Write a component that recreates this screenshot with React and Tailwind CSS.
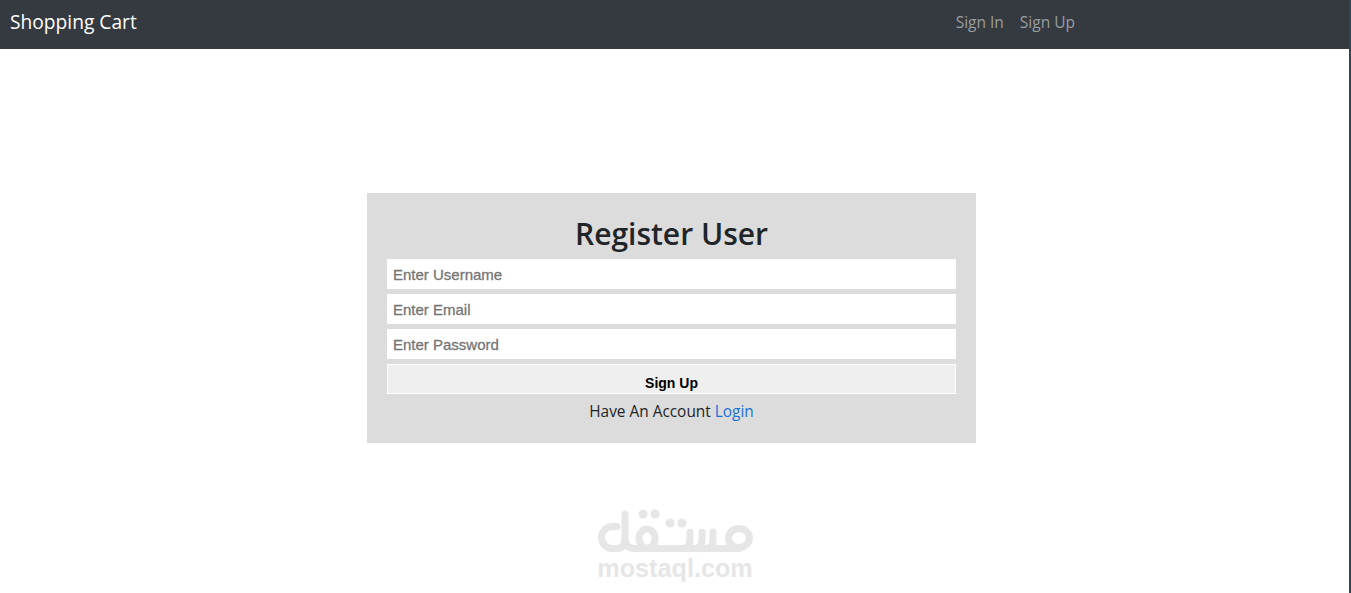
function MostaqlLogo() {
  return (
    <svg width="156" height="50" viewBox="0 0 156 50" fill="none" stroke="#e6e6e6" strokeWidth="7" strokeLinecap="round" strokeLinejoin="round">
      <path d="M20 21.500 H15.500 A11 11 0 0 0 15.500 43.500 H20 Q28 43.500 28 33 V9" />
      <path d="M28 33 Q28 43.500 38 43.500 H142" />
      <ellipse cx="50" cy="33.500" rx="8" ry="9.500" />
      <path d="M93 27 V35 Q93 43.500 85 43.500 M105 27 V35 Q105 43.500 97 43.500 M116 27 V35 Q116 43.500 108 43.500" />
      <ellipse cx="142" cy="33" rx="10.500" ry="9.500" />
      <circle cx="46" cy="9" r="4.500" fill="#e6e6e6" stroke="none" />
      <circle cx="58" cy="9" r="4.500" fill="#e6e6e6" stroke="none" />
      <circle cx="73" cy="18" r="4.500" fill="#e6e6e6" stroke="none" />
      <circle cx="85" cy="18" r="4.500" fill="#e6e6e6" stroke="none" />
    </svg>
  )
}

function Field({ placeholder, type }) {
  return (
    <input
      type={type}
      placeholder={placeholder}
      className="h-[30px] w-full bg-white px-1.5 font-['Liberation_Sans',sans-serif] text-[15px] text-black outline-none placeholder:text-[#757575] placeholder:[-webkit-text-stroke:0.3px]"
    />
  )
}

export default function App() {
  return (
    <div className="flex min-h-[593px] font-['Open_Sans','Noto_Sans',sans-serif] text-[#212529]">
      <div className="min-w-0 flex-1 bg-white">
        <nav className="flex h-[49px] items-center bg-[#343a40] pb-1 pl-2.5 pr-[274px]">
          <a href="#" className="text-[19.2px] text-white">Shopping Cart</a>
          <div className="ml-auto flex gap-4 text-[15.5px] text-[#9a9da0]">
            <a href="#">Sign In</a>
            <a href="#">Sign Up</a>
          </div>
        </nav>

        <main className="pl-[367px] pt-[144px]">
          <form className="flex h-[250px] w-[609px] flex-col gap-[5px] bg-[#dcdcdc] px-5 pt-5">
            <h1 className="h-[41px] text-center text-[30px] leading-[41px] font-semibold">Register User</h1>
            <Field type="text" placeholder="Enter Username" />
            <Field type="email" placeholder="Enter Email" />
            <Field type="password" placeholder="Enter Password" />
            <button type="button" className="h-[30px] border border-white bg-[#efefef] pt-2 font-['Liberation_Sans',sans-serif] text-[14px] font-bold text-black">
              Sign Up
            </button>
            <p className="pt-px text-center text-[15.4px] leading-6">
              Have An Account <a href="#" className="text-[#1a73d9]">Login</a>
            </p>
          </form>
        </main>

        <div className="ml-[597px] mt-[62px] flex w-[156px] flex-col items-center">
          <MostaqlLogo />
          <span className="font-['Liberation_Sans',sans-serif] text-[25.2px] leading-[26px] font-bold text-[#e6e6e6]">mostaql.com</span>
        </div>
      </div>
      <div className="w-[2px] bg-[#2d4558]" />
    </div>
  )
}
